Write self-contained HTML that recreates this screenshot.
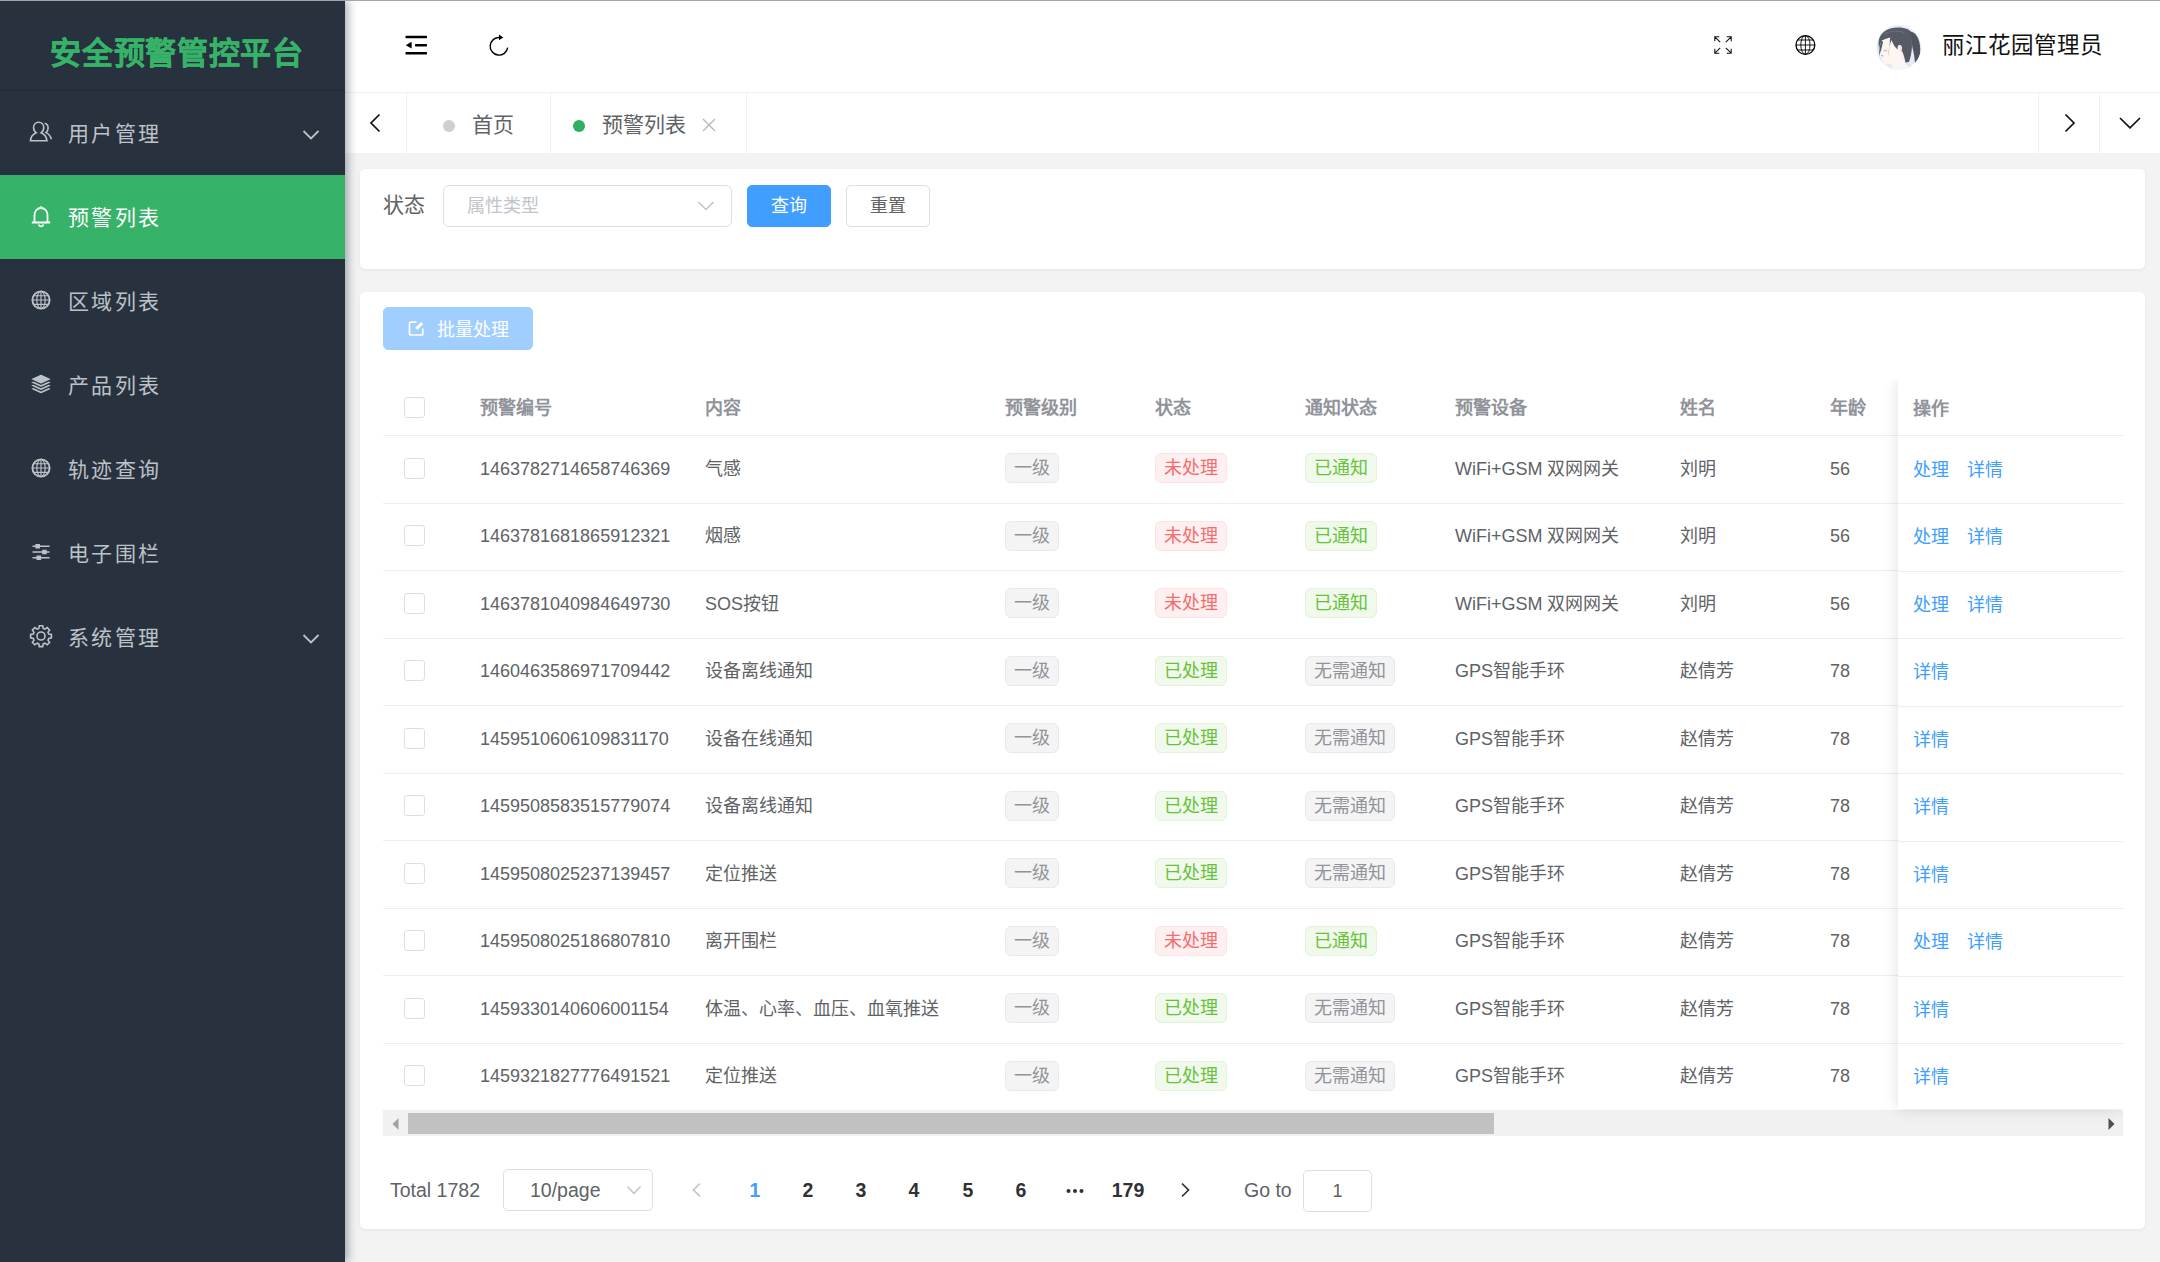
<!DOCTYPE html>
<html lang="zh-CN">
<head>
<meta charset="utf-8">
<title>安全预警管控平台</title>
<style>
*{box-sizing:border-box;margin:0;padding:0}
html,body{width:2160px;height:1262px;overflow:hidden;background:#f3f3f3;font-family:"Liberation Sans",sans-serif;color:#606266}
body{position:relative}
svg{display:block}
.abs{position:absolute}
/* ---------- sidebar ---------- */
#sidebar{position:absolute;left:0;top:0;width:345px;height:1262px;background:#28323e;box-shadow:3px 0 9px rgba(0,21,41,.35);z-index:10}
#logo{position:absolute;left:0;top:1px;width:345px;height:90px;border-bottom:1.5px solid #222b36;color:#36b368;font-weight:bold;font-size:31px;line-height:106.500px;text-align:center;letter-spacing:.7px;padding-left:9px;white-space:nowrap;-webkit-text-stroke:.25px #36b368}
.mi{position:absolute;left:0;width:345px;height:84px;color:#bdc2c9;font-size:21px;letter-spacing:2.3px;line-height:84px;white-space:nowrap}
.mi.on{background:#36b368;color:#fff}
.mi .ic{position:absolute;left:28.500px;top:28.800px;width:24px;height:24px}
.mi .tx{position:absolute;left:68px;top:1px}
.mi .ar{position:absolute;left:302px;top:38px;width:18px;height:12px}
/* ---------- header ---------- */
#topline{position:absolute;left:0;top:0;width:2160px;height:1px;background:#a6a6a6;z-index:20}
#header{position:absolute;left:345px;top:0;width:1815px;height:93px;background:#fff;border-bottom:1px solid #efefef}
#uname{position:absolute;left:1942px;top:31px;font-size:22.5px;line-height:30px;color:#111;white-space:nowrap}
/* ---------- tabs ---------- */
#tabs{position:absolute;left:345px;top:93px;width:1815px;height:60px;background:#fff}
.tb{position:absolute;top:0;height:60px;border-right:1px solid #f0f0f0}
.tabtx{position:absolute;top:17px;font-size:21px;line-height:30px;color:#5f6266;white-space:nowrap}
.dot{position:absolute;width:12px;height:12px;border-radius:50%}
/* ---------- cards ---------- */
.card{position:absolute;left:360px;width:1785px;background:#fff;border-radius:5px;box-shadow:0 1px 3px rgba(0,0,0,.07)}

/* ---------- filter ---------- */
#flabel{position:absolute;left:383px;top:190px;font-size:21px;line-height:30px;color:#606266;white-space:nowrap}
#fsel{position:absolute;left:443px;top:185px;width:289px;height:42px;border:1px solid #dcdfe6;border-radius:6px;background:#fff}
#fsel span{position:absolute;left:23px;top:5px;font-size:18px;line-height:30px;color:#c0c4cc;white-space:nowrap}
.btn{position:absolute;height:42px;border-radius:5px;font-size:18px;line-height:40px;text-align:center;white-space:nowrap}
#bq{left:747px;top:185px;width:84px;background:#409eff;color:#fff;border:1px solid #409eff}
#br{left:846px;top:185px;width:84px;background:#fff;color:#606266;border:1px solid #dcdfe6}
#bb{left:383px;top:307px;width:150px;height:43px;background:#a0cfff;color:#fff;border:1px solid #a0cfff;line-height:41px}
#bb span{position:absolute;left:53px;top:1.5px}
/* ---------- table ---------- */
#tbl{position:absolute;left:383px;top:380px;width:1740px;height:731px;background:#fff;overflow:hidden}
#fixwrap{position:absolute;left:1873px;top:380px;width:250px;height:756px;overflow:hidden;z-index:3}
#fix{position:absolute;left:25px;top:0;width:225px;height:729px;background:#fff;box-shadow:0 0 15px rgba(0,0,0,.13)}
.thead{position:absolute;left:0;top:0;width:100%;height:56px;border-bottom:1px solid #ebeef5}
.th{position:absolute;top:13px;font-size:18px;line-height:30px;font-weight:bold;color:#909399;white-space:nowrap}
.tr{position:absolute;left:0;width:100%}
.bl{position:absolute;left:0;width:100%;height:1px;background:#ebeef5}
.tdc{position:absolute;top:18px;font-size:18px;line-height:30px;color:#606266;white-space:nowrap}
.cb{position:absolute;width:21px;height:21px;border:1px solid #dcdfe6;border-radius:3px;background:#fff}
.tag{position:absolute;top:17.5px;height:30px;padding:0 8px;font-size:18px;line-height:28px;border-radius:6px;border:1px solid;white-space:nowrap}
.ti{background:#f4f4f5;border-color:#e9e9eb;color:#909399}
.td{background:#fef0f0;border-color:#fde2e2;color:#f56c6c}
.ts{background:#f0f9eb;border-color:#e1f3d8;color:#67c23a}
.lk{position:absolute;top:19px;font-size:18px;line-height:30px;color:#409eff;white-space:nowrap}
/* ---------- scrollbar ---------- */
#sbar{position:absolute;left:383px;top:1111px;width:1740px;height:25px;background:#f1f1f1}
#sthumb{position:absolute;left:25px;top:2px;width:1086px;height:21px;background:#c1c1c1}
/* ---------- pagination ---------- */
.pg{position:absolute;top:1175px;font-size:19.5px;line-height:30px;white-space:nowrap;color:#606266}
.pn{position:absolute;top:1175px;width:54px;text-align:center;font-size:19.5px;line-height:30px;font-weight:bold;color:#303133}
#psel{position:absolute;left:503px;top:1169px;width:150px;height:42px;border:1px solid #dcdfe6;border-radius:5px;background:#fff}
#pin{position:absolute;left:1303px;top:1170px;width:69px;height:42px;border:1px solid #dcdfe6;border-radius:5px;background:#fff;text-align:center;font-size:18px;line-height:41px;color:#606266}
</style>
</head>
<body>
<div id="topline"></div>

<!-- ================= SIDEBAR ================= -->
<div id="sidebar">
  <div id="logo">安全预警管控平台</div>

  <div class="mi" style="top:91px">
    <svg class="ic" viewBox="0.700 0.900 22.600 22.600" fill="none" stroke="#bdc2c9" stroke-width="1.500"><path d="M2 20.5c.5-4.5 3-6.500 5.500-7.500C5.800 11.800 5 10 5 8c0-3 2-5 4.800-5s4.800 2 4.800 5c0 2-.8 3.800-2.500 5 2.500 1 5 3 5.500 7.500z"/><path d="M15.500 4c2 .6 3.200 2.300 3.200 4.500 0 1.800-.7 3.300-2 4.300 2.500 1.200 4.300 3 5 6.200"/></svg>
    <span class="tx">用户管理</span>
    <svg class="ar" viewBox="0 0 18 12" fill="none" stroke="#bdc2c9" stroke-width="1.8"><path d="M1.500 2l7.500 7.500L16.500 2"/></svg>
  </div>

  <div class="mi on" style="top:175px">
    <svg class="ic" viewBox="0 0 24 24" fill="none" stroke="#fff" stroke-width="1.8"><path d="M12 2.200v1.500M5.500 18.500v-7.500c0-4 2.800-7 6.500-7s6.500 3 6.500 7v7.500M2.800 18.500h18.400M9.500 20.500c.4 1.200 1.300 1.800 2.500 1.800s2.100-.6 2.500-1.800"/></svg>
    <span class="tx">预警列表</span>
  </div>

  <div class="mi" style="top:259px">
    <svg class="ic" viewBox="0 0 24 24" fill="none" stroke="#bdc2c9"><circle cx="12" cy="12" r="8.600" stroke-width="1.900"/><g stroke-width="1.150"><ellipse cx="12" cy="12" rx="4.200" ry="8.600"/><path d="M12 3.400v17.200M3.400 12h17.200M4.600 7.700h14.800M4.600 16.300h14.800"/></g></svg>
    <span class="tx">区域列表</span>
  </div>

  <div class="mi" style="top:343px">
    <svg class="ic" viewBox="0 0 24 24" fill="#bdc2c9" stroke="#28323e" stroke-width="1.300" stroke-linejoin="miter"><path d="M12 11.6L23.300 16.8 12 22.0 .7 16.8z"/><path d="M12 8.4L23.300 13.6 12 18.8 .7 13.6z"/><path d="M12 5.2L23.300 10.4 12 15.6 .7 10.4z"/><path d="M12 2.0L23.300 7.2 12 12.4 .7 7.2z"/></svg>
    <span class="tx">产品列表</span>
  </div>

  <div class="mi" style="top:427px">
    <svg class="ic" viewBox="0 0 24 24" fill="none" stroke="#bdc2c9"><circle cx="12" cy="12" r="8.600" stroke-width="1.900"/><g stroke-width="1.150"><ellipse cx="12" cy="12" rx="4.200" ry="8.600"/><path d="M12 3.400v17.200M3.400 12h17.200M4.600 7.700h14.800M4.600 16.300h14.800"/></g></svg>
    <span class="tx">轨迹查询</span>
  </div>

  <div class="mi" style="top:511px">
    <svg class="ic" viewBox="0 0 24 24" fill="#bdc2c9" stroke="none"><rect x="3.500" y="5.500" width="17" height="1.500"/><rect x="3.500" y="11.250" width="17" height="1.500"/><rect x="3.500" y="17" width="17" height="1.500"/><rect x="6.400" y="4" width="4.600" height="4.500"/><rect x="13.100" y="9.750" width="4.600" height="4.500"/><rect x="7.500" y="15.500" width="4.600" height="4.500"/></svg>
    <span class="tx">电子围栏</span>
  </div>

  <div class="mi" style="top:595px">
    <svg class="ic" viewBox="0 0 24 24" fill="none" stroke="#bdc2c9" stroke-width="1.600"><circle cx="12" cy="12" r="4"/><path d="M10.300 1.800h3.400l.5 2.700 1.700.7 2.300-1.600 2.400 2.400-1.600 2.300.7 1.700 2.700.5v3.400l-2.700.5-.7 1.700 1.600 2.300-2.400 2.400-2.300-1.600-1.700.7-.5 2.700h-3.400l-.5-2.700-1.700-.7-2.300 1.600-2.400-2.400 1.600-2.300-.7-1.700-2.700-.5v-3.400l2.700-.5.700-1.700L3.400 6l2.400-2.400 2.300 1.600 1.700-.7z"/></svg>
    <span class="tx">系统管理</span>
    <svg class="ar" viewBox="0 0 18 12" fill="none" stroke="#bdc2c9" stroke-width="1.800"><path d="M1.500 2l7.500 7.500L16.500 2"/></svg>
  </div>
</div>

<!-- ================= HEADER ================= -->
<div id="header"></div>
<!-- fold icon -->
<svg class="abs" style="left:404px;top:33px" width="26" height="26" viewBox="0 0 26 26" fill="#000"><rect x="1.500" y="2.800" width="21.500" height="2.400" rx=".6"/><rect x="11" y="11" width="12" height="2.400" rx=".6"/><rect x="1.500" y="19" width="21.500" height="2.400" rx=".6"/><path d="M1.800 12.200l5.800-3.400v6.800z"/></svg>
<!-- refresh icon -->
<svg class="abs" style="left:486px;top:33px" width="26" height="26" viewBox="0 0 26 26" fill="none" stroke="#000" stroke-width="1.400"><path d="M21.700 14.700A8.800 8.800 0 1 1 13.500 4.500"/><path d="M13 1.400l4.300 3.200L13 7.300z" fill="#000" stroke="none"/></svg>
<!-- fullscreen icon -->
<svg class="abs" style="left:1712px;top:34px" width="22" height="22" viewBox="0 0 22 22" fill="none" stroke="#111" stroke-width="1.050"><path d="M2.800 2.800l5.400 5.400M2.800 7.300V2.800h4.500M19.200 2.800l-5.400 5.400M14.700 2.800h4.500v4.500M2.800 19.200l5.400-5.400M2.800 14.700v4.500h4.500M19.200 19.200l-5.400-5.400M19.200 14.700v4.500h-4.500"/></svg>
<!-- globe icon -->
<svg class="abs" style="left:1794px;top:34px" width="23" height="22" viewBox="0 0 23 22" fill="none" stroke="#000"><circle cx="11.400" cy="11" r="9.400" stroke-width="1.350"/><g stroke-width=".9"><ellipse cx="11.400" cy="11" rx="4.600" ry="9.400"/><path d="M11.400 1.600v18.800M2 11h18.800M3.600 6h15.600M3.600 16h15.600"/></g></svg>
<!-- avatar -->
<svg class="abs" style="left:1876px;top:25px" width="46" height="46" viewBox="0 0 46 46"><defs><clipPath id="avc"><circle cx="22.700" cy="22.400" r="22.300"/></clipPath></defs><g clip-path="url(#avc)"><rect width="46" height="46" fill="#e3ecf7"/><path d="M6 14L3.800 24l-.6 5.500 2.300 3.500.5 3L8.500 39.500l6.500-.8 3.500 7.300h13l-2.500-9-2-5-1.500-13-13-8z" fill="#fcf5f0"/><path d="M5 30.500l2.500.5M8 25.500l3 .3" stroke="#8a8f99" stroke-width=".7" fill="none"/><path d="M28.500 37l5 3.500-1.500 5.500h-8z" fill="#f4f6fb"/><path d="M28.500 37l5 3.500-1 3" fill="none" stroke="#c5d0e4" stroke-width=".7"/><path d="M2.500 18C3 8 11 2.500 22 2.500c8 0 12 2.500 13.500 5L36 22c-.5 6-1.500 11-3 15l-3.500.5c-1-4.500-2-9.500-4-12 1.500-3 0-5.500-2-5.500s-2.300 2.500-1.500 4.500C19 23 16.500 18 14.500 12.500 12 13 8 14.500 5.500 15.500 4.500 18 3.500 21 3 24z" fill="#565b65"/><path d="M34 6.500c6 .5 10 7.500 10.300 17.500.2 7-2.300 12-5.300 14.500-.5-5.500-1-10.500-2.500-15.500z" fill="#50555f"/><path d="M5.500 15c-1.500 4-2.500 9-2.300 16 1.300-4 2.800-9 3.800-14z" fill="#565b65"/><path d="M14 12.500c0 6.500-1 13.500-2 19.500.5-6 1.500-13 4-18z" fill="#565b65"/><path d="M22.500 21.500c2.300.3 3.200 2.500 2.300 5" fill="none" stroke="#e5b9ae" stroke-width=".7"/><path d="M8 9.500c5-3.500 13-4.500 20-2" fill="none" stroke="#6c717b" stroke-width="1"/></g></svg>
<div id="uname">丽江花园管理员</div>

<!-- ================= TABS ================= -->
<div id="tabs">
  <div class="tb" style="left:0;width:62px"></div>
  <div class="tb" style="left:62px;width:144px"></div>
  <div class="tb" style="left:206px;width:196px"></div>
  <div class="tb" style="left:1693px;width:61px;border-right:none;border-left:1px solid #f0f0f0"></div>
  <div class="tb" style="left:1754px;width:61px;border-right:none;border-left:1px solid #f0f0f0"></div>
</div>
<svg class="abs" style="left:366px;top:111px" width="20" height="24" viewBox="0 0 20 24" fill="none" stroke="#111" stroke-width="1.700"><path d="M13.500 3.500L5 12l8.500 8.500"/></svg>
<div class="dot" style="left:443px;top:120px;background:#cfcfcf"></div>
<div class="tabtx" style="left:472px;top:110px">首页</div>
<div class="dot" style="left:573px;top:120px;background:#2db160"></div>
<div class="tabtx" style="left:602px;top:110px">预警列表</div>
<svg class="abs" style="left:701px;top:117px" width="16" height="16" viewBox="0 0 16 16" fill="none" stroke="#b5b8bd" stroke-width="1.400"><path d="M2 2l12 12M14 2L2 14"/></svg>
<svg class="abs" style="left:2059px;top:111px" width="20" height="24" viewBox="0 0 20 24" fill="none" stroke="#111" stroke-width="1.700"><path d="M6.500 3.500L15 12l-8.500 8.500"/></svg>
<svg class="abs" style="left:2117px;top:113px" width="26" height="20" viewBox="0 0 26 20" fill="none" stroke="#111" stroke-width="1.700"><path d="M3 5l10 9.800L23 5"/></svg>

<!-- ================= FILTER CARD ================= -->
<div class="card" id="fcard" style="top:169px;height:99.5px"></div>

<!-- ================= TABLE CARD ================= -->
<div class="card" id="tcard" style="top:292px;height:937px"></div>

<div id="flabel">状态</div>
<div id="fsel"><span>属性类型</span>
  <svg class="abs" style="left:253px;top:14px" width="18" height="12" viewBox="0 0 18 12" fill="none" stroke="#c0c4cc" stroke-width="1.500"><path d="M1.500 2l7.500 7.500L16.500 2"/></svg>
</div>
<div class="btn" id="bq">查询</div>
<div class="btn" id="br">重置</div>

<div class="btn" id="bb">
  <svg class="abs" style="left:23px;top:11px" width="19" height="19" viewBox="0 0 19 19" fill="none" stroke="#fff" stroke-width="1.700"><path d="M15.800 9.500v5.500a1 1 0 0 1-1 1H3.500a1 1 0 0 1-1-1V4.200a1 1 0 0 1 1-1h6"/><path d="M9.300 9.900l5.900-5.900" stroke-width="2.900"/></svg>
  <span>批量处理</span>
</div>

<!-- ================= TABLE ================= -->
<div id="tbl">
<div class="thead"><span class="cb" style="left:21px;top:17px"></span><span class="th" style="left:97px">预警编号</span><span class="th" style="left:322px">内容</span><span class="th" style="left:622px">预警级别</span><span class="th" style="left:772px">状态</span><span class="th" style="left:922px">通知状态</span><span class="th" style="left:1072px">预警设备</span><span class="th" style="left:1297px">姓名</span><span class="th" style="left:1447px">年龄</span></div>
<div class="tr" style="top:55.75px;height:67.5px"><span class="cb" style="left:21px;top:22px"></span><span class="tdc" style="left:97px">1463782714658746369</span><span class="tdc" style="left:322px">气感</span><span class="tag ti" style="left:622px">一级</span><span class="tag td" style="left:772px">未处理</span><span class="tag ts" style="left:922px">已通知</span><span class="tdc" style="left:1072px">WiFi+GSM 双网网关</span><span class="tdc" style="left:1297px">刘明</span><span class="tdc" style="left:1447px">56</span></div>
<div class="tr" style="top:123.25px;height:67.5px"><span class="cb" style="left:21px;top:22px"></span><span class="tdc" style="left:97px">1463781681865912321</span><span class="tdc" style="left:322px">烟感</span><span class="tag ti" style="left:622px">一级</span><span class="tag td" style="left:772px">未处理</span><span class="tag ts" style="left:922px">已通知</span><span class="tdc" style="left:1072px">WiFi+GSM 双网网关</span><span class="tdc" style="left:1297px">刘明</span><span class="tdc" style="left:1447px">56</span></div>
<div class="tr" style="top:190.75px;height:67.5px"><span class="cb" style="left:21px;top:22px"></span><span class="tdc" style="left:97px">1463781040984649730</span><span class="tdc" style="left:322px">SOS按钮</span><span class="tag ti" style="left:622px">一级</span><span class="tag td" style="left:772px">未处理</span><span class="tag ts" style="left:922px">已通知</span><span class="tdc" style="left:1072px">WiFi+GSM 双网网关</span><span class="tdc" style="left:1297px">刘明</span><span class="tdc" style="left:1447px">56</span></div>
<div class="tr" style="top:258.25px;height:67.5px"><span class="cb" style="left:21px;top:22px"></span><span class="tdc" style="left:97px">1460463586971709442</span><span class="tdc" style="left:322px">设备离线通知</span><span class="tag ti" style="left:622px">一级</span><span class="tag ts" style="left:772px">已处理</span><span class="tag ti" style="left:922px">无需通知</span><span class="tdc" style="left:1072px">GPS智能手环</span><span class="tdc" style="left:1297px">赵倩芳</span><span class="tdc" style="left:1447px">78</span></div>
<div class="tr" style="top:325.75px;height:67.5px"><span class="cb" style="left:21px;top:22px"></span><span class="tdc" style="left:97px">1459510606109831170</span><span class="tdc" style="left:322px">设备在线通知</span><span class="tag ti" style="left:622px">一级</span><span class="tag ts" style="left:772px">已处理</span><span class="tag ti" style="left:922px">无需通知</span><span class="tdc" style="left:1072px">GPS智能手环</span><span class="tdc" style="left:1297px">赵倩芳</span><span class="tdc" style="left:1447px">78</span></div>
<div class="tr" style="top:393.25px;height:67.5px"><span class="cb" style="left:21px;top:22px"></span><span class="tdc" style="left:97px">1459508583515779074</span><span class="tdc" style="left:322px">设备离线通知</span><span class="tag ti" style="left:622px">一级</span><span class="tag ts" style="left:772px">已处理</span><span class="tag ti" style="left:922px">无需通知</span><span class="tdc" style="left:1072px">GPS智能手环</span><span class="tdc" style="left:1297px">赵倩芳</span><span class="tdc" style="left:1447px">78</span></div>
<div class="tr" style="top:460.75px;height:67.5px"><span class="cb" style="left:21px;top:22px"></span><span class="tdc" style="left:97px">1459508025237139457</span><span class="tdc" style="left:322px">定位推送</span><span class="tag ti" style="left:622px">一级</span><span class="tag ts" style="left:772px">已处理</span><span class="tag ti" style="left:922px">无需通知</span><span class="tdc" style="left:1072px">GPS智能手环</span><span class="tdc" style="left:1297px">赵倩芳</span><span class="tdc" style="left:1447px">78</span></div>
<div class="tr" style="top:528.25px;height:67.5px"><span class="cb" style="left:21px;top:22px"></span><span class="tdc" style="left:97px">1459508025186807810</span><span class="tdc" style="left:322px">离开围栏</span><span class="tag ti" style="left:622px">一级</span><span class="tag td" style="left:772px">未处理</span><span class="tag ts" style="left:922px">已通知</span><span class="tdc" style="left:1072px">GPS智能手环</span><span class="tdc" style="left:1297px">赵倩芳</span><span class="tdc" style="left:1447px">78</span></div>
<div class="tr" style="top:595.75px;height:67.5px"><span class="cb" style="left:21px;top:22px"></span><span class="tdc" style="left:97px">1459330140606001154</span><span class="tdc" style="left:322px">体温、心率、血压、血氧推送</span><span class="tag ti" style="left:622px">一级</span><span class="tag ts" style="left:772px">已处理</span><span class="tag ti" style="left:922px">无需通知</span><span class="tdc" style="left:1072px">GPS智能手环</span><span class="tdc" style="left:1297px">赵倩芳</span><span class="tdc" style="left:1447px">78</span></div>
<div class="tr" style="top:663.25px;height:67.5px"><span class="cb" style="left:21px;top:22px"></span><span class="tdc" style="left:97px">1459321827776491521</span><span class="tdc" style="left:322px">定位推送</span><span class="tag ti" style="left:622px">一级</span><span class="tag ts" style="left:772px">已处理</span><span class="tag ti" style="left:922px">无需通知</span><span class="tdc" style="left:1072px">GPS智能手环</span><span class="tdc" style="left:1297px">赵倩芳</span><span class="tdc" style="left:1447px">78</span></div>
<div class="bl" style="top:123px"></div>
<div class="bl" style="top:190px"></div>
<div class="bl" style="top:258px"></div>
<div class="bl" style="top:325px"></div>
<div class="bl" style="top:393px"></div>
<div class="bl" style="top:460px"></div>
<div class="bl" style="top:528px"></div>
<div class="bl" style="top:595px"></div>
<div class="bl" style="top:663px"></div>
<div class="bl" style="top:730px"></div>
</div>
<div id="fixwrap"><div id="fix">
<div class="thead"><span class="th" style="left:15px;top:14px">操作</span></div>
<div class="tr" style="top:55.75px;height:67.5px"><span class="lk" style="left:15px">处理</span><span class="lk" style="left:69px">详情</span></div>
<div class="tr" style="top:123.25px;height:67.5px"><span class="lk" style="left:15px">处理</span><span class="lk" style="left:69px">详情</span></div>
<div class="tr" style="top:190.75px;height:67.5px"><span class="lk" style="left:15px">处理</span><span class="lk" style="left:69px">详情</span></div>
<div class="tr" style="top:258.25px;height:67.5px"><span class="lk" style="left:15px">详情</span></div>
<div class="tr" style="top:325.75px;height:67.5px"><span class="lk" style="left:15px">详情</span></div>
<div class="tr" style="top:393.25px;height:67.5px"><span class="lk" style="left:15px">详情</span></div>
<div class="tr" style="top:460.75px;height:67.5px"><span class="lk" style="left:15px">详情</span></div>
<div class="tr" style="top:528.25px;height:67.5px"><span class="lk" style="left:15px">处理</span><span class="lk" style="left:69px">详情</span></div>
<div class="tr" style="top:595.75px;height:67.5px"><span class="lk" style="left:15px">详情</span></div>
<div class="tr" style="top:663.25px;height:67.5px"><span class="lk" style="left:15px">详情</span></div>
<div class="bl" style="top:123px"></div>
<div class="bl" style="top:191px"></div>
<div class="bl" style="top:258px"></div>
<div class="bl" style="top:326px"></div>
<div class="bl" style="top:393px"></div>
<div class="bl" style="top:461px"></div>
<div class="bl" style="top:528px"></div>
<div class="bl" style="top:596px"></div>
<div class="bl" style="top:663px"></div>
</div></div>
<!-- scrollbar -->
<div id="sbar"><div id="sthumb"></div>
  <svg class="abs" style="left:9px;top:6.500px" width="7" height="12" viewBox="0 0 7 12"><path d="M6.500 0v12L.5 6z" fill="#a3a3a3"/></svg>
  <svg class="abs" style="left:1724.500px;top:6.500px" width="7" height="12" viewBox="0 0 7 12"><path d="M.5 0v12L6.500 6z" fill="#505050"/></svg>
</div>

<!-- pagination -->
<div class="pg" style="left:390px">Total 1782</div>
<div id="psel"><span class="pg" style="position:absolute;left:26px;top:5px">10/page</span>
  <svg class="abs" style="left:122px;top:15px" width="16" height="11" viewBox="0 0 16 11" fill="none" stroke="#c0c4cc" stroke-width="1.500"><path d="M1.500 1.500l6.500 7 6.500-7"/></svg>
</div>
<svg class="abs" style="left:690px;top:1182px" width="13" height="16" viewBox="0 0 13 16" fill="none" stroke="#c0c4cc" stroke-width="1.700"><path d="M10 1.500L3.500 8l6.500 6.500"/></svg>
<div class="pn" style="left:728px;color:#409eff">1</div>
<div class="pn" style="left:781px">2</div>
<div class="pn" style="left:834px">3</div>
<div class="pn" style="left:887px">4</div>
<div class="pn" style="left:941px">5</div>
<div class="pn" style="left:994px">6</div>
<svg class="abs" style="left:1066px;top:1188px" width="18" height="6" viewBox="0 0 18 6" fill="#303133"><circle cx="2.500" cy="3" r="2"/><circle cx="9" cy="3" r="2"/><circle cx="15.500" cy="3" r="2"/></svg>
<div class="pn" style="left:1101px">179</div>
<svg class="abs" style="left:1179px;top:1182px" width="13" height="16" viewBox="0 0 13 16" fill="none" stroke="#303133" stroke-width="1.700"><path d="M3 1.500L9.500 8 3 14.500"/></svg>
<div class="pg" style="left:1244px">Go to</div>
<div id="pin">1</div>

</body>
</html>
